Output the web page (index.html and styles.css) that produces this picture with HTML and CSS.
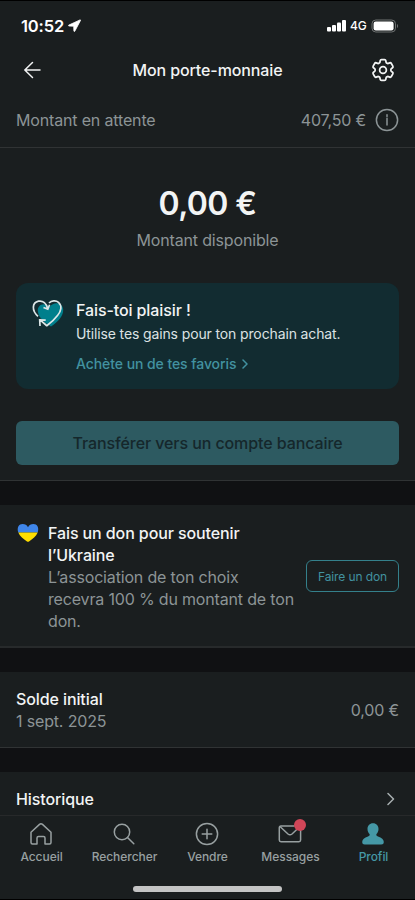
FILE: index.html
```html
<!DOCTYPE html>
<html lang="fr">
<head>
<meta charset="utf-8">
<meta name="viewport" content="width=device-width, initial-scale=1">
<title>Mon porte-monnaie</title>
<link rel="stylesheet" href="styles.css">
</head>
<body>
<div class="screen">
  <header class="status">
    <span class="time">10:52</span>
    <svg class="location" width="13" height="13" viewBox="0 0 13 13"><path d="M12 .9.8 6.1c-.6.3-.4.9.2.9l4.700.2.2 4.800c0 .6.7.7.9.2L12.500 1.400c.1-.4-.1-.6-.5-.5Z" fill="#fff" stroke="#fff" stroke-width=".8"/></svg>
    <svg class="signal" width="19" height="12" viewBox="0 0 19 12" fill="#fff"><rect x="0" y="7" width="4" height="4.500" rx="1"/><rect x="5" y="5" width="4" height="6.500" rx="1"/><rect x="10" y="2.500" width="4" height="9" rx="1"/><rect x="15" y="0" width="4" height="11.500" rx="1"/></svg>
    <span class="network">4G</span>
    <svg class="battery" width="28" height="14" viewBox="0 0 28 14"><rect x="1" y="1" width="23.500" height="12" rx="3.800" fill="none" stroke="#6f7272"/><rect x="2.600" y="2.600" width="20" height="8.800" rx="2.200" fill="#fff"/><path d="M26 5v4c1.400-.6 1.400-3.400 0-4Z" fill="#6f7272"/></svg>
  </header>
  <nav class="topbar">
    <svg width="24" height="24" viewBox="0 0 24 24" class="line"><path d="M20 12H4.800M12.500 4.500 4.800 12l7.700 7.500"/></svg>
    <h1>Mon porte-monnaie</h1>
    <svg width="24" height="24" viewBox="1.700 1.700 20.600 20.600" class="line"><path d="M9.594 3.940c.09-.542.56-.94 1.110-.94h2.593c.55 0 1.020.398 1.110.94l.213 1.281c.063.374.313.686.645.87.074.04.147.083.22.127.325.196.72.257 1.075.124l1.217-.456a1.125 1.125 0 0 1 1.370.49l1.296 2.247a1.125 1.125 0 0 1-.26 1.431l-1.003.827c-.293.241-.438.613-.43.992a7.723 7.723 0 0 1 0 .255c-.008.378.137.75.43.991l1.004.827c.424.35.534.955.26 1.430l-1.298 2.247a1.125 1.125 0 0 1-1.369.491l-1.217-.456c-.355-.133-.75-.072-1.076.124a6.470 6.470 0 0 1-.22.128c-.331.183-.581.495-.644.869l-.213 1.281c-.09.543-.56.94-1.110.94h-2.594c-.55 0-1.019-.398-1.110-.94l-.213-1.281c-.062-.374-.312-.686-.644-.87a6.520 6.520 0 0 1-.22-.127c-.325-.196-.72-.257-1.076-.124l-1.217.456a1.125 1.125 0 0 1-1.369-.49l-1.297-2.247a1.125 1.125 0 0 1 .26-1.431l1.004-.827c.292-.24.437-.613.43-.991a6.932 6.932 0 0 1 0-.255c.007-.38-.138-.751-.43-.992l-1.004-.827a1.125 1.125 0 0 1-.26-1.430l1.297-2.247a1.125 1.125 0 0 1 1.370-.491l1.216.456c.356.133.751.072 1.076-.124.072-.044.146-.086.22-.128.332-.183.582-.495.644-.869l.214-1.280Z"/><circle cx="12" cy="12" r="2.900"/></svg>
  </nav>
  <section class="pending">
    <span>Montant en attente</span>
    <span class="pending-sum">407,50 €</span>
    <svg width="24" height="24" viewBox="0 0 24 24" class="line"><circle cx="12" cy="12" r="10.600"/><path d="M12 10.200V17M12 6.700v1.700"/></svg>
  </section>
  <section class="balance">
    <strong>0,00 €</strong>
    <p>Montant disponible</p>
    <div class="promo">
      <svg width="32" height="32" viewBox="0 0 32 32" fill="none"><path d="M19 27.500C13 24 6.500 19 5.800 12 5.300 6 12 2.500 17.500 8 22 2 30.500 3.500 31.200 10.500 31.500 17 26 23 19 27.500Z" fill="#007f8c"/><path d="M6 17.300C-.5 11.500 0 3.700 6.500 2.200c4.600-.8 8 2.300 9 7.300M11.500 8.500l4.300 1.700 1.800-4.500M17 4c2.500-2.500 7-2.900 9.500-.7 4 3.600 2.500 9.200-.8 13-2.900 3.900-6.700 7.400-10.900 10.400-2.800-2.400-4.500-3.800-7-6.400M8 27l-.3-6.200 6 .4" stroke="#dce7e8" stroke-width="1.700"/></svg>
      <div class="promo-text">
        <h2>Fais-toi plaisir !</h2>
        <p>Utilise tes gains pour ton prochain achat.</p>
        <a>Achète un de tes favoris <svg width="6" height="10" viewBox="0 0 6 10" class="line"><path d="m1 1 4 4-4 4"/></svg></a>
      </div>
    </div>
    <button class="transfer">Transférer vers un compte bancaire</button>
  </section>
  <section class="donation">
    <svg width="24" height="20" viewBox="0 0 24 20"><path d="M2.300 9.500C.6 4.300 3 1 6.600 1 9 1 11 2.200 12 4.200 13 2.200 15 1 17.400 1 21 1 23.400 4.300 21.700 9.500Z" fill="#3f86ea"/><path d="M2.300 9.500h19.400c-1.600 3.700-5.100 6.600-8.700 9-.6.400-1.400.4-2 0-3.600-2.400-7.100-5.300-8.700-9Z" fill="#ffde00"/></svg>
    <div class="donation-text">
      <h2>Fais un don pour soutenir l’Ukraine</h2>
      <p>L’association de ton choix recevra 100 % du montant de ton don.</p>
    </div>
    <button class="donate">Faire un don</button>
  </section>
  <section class="opening">
    <div>
      <h2>Solde initial</h2>
      <p>1 sept. 2025</p>
    </div>
    <span>0,00 €</span>
  </section>
  <section class="history">
    <h2>Historique</h2>
    <svg width="8" height="14" viewBox="0 0 8 14" class="line"><path d="m1 1.500 5.500 5.500L1 12.500"/></svg>
  </section>
  <footer class="tabs">
    <div class="tab"><svg width="24" height="24" viewBox="0 0 24 24" class="line"><path d="M2 10.300 10.500 2.400q1.500-1.400 3 0L22 10.300v10.200q0 1.500-1.500 1.500H16v-6q0-1.500-1.500-1.500h-5Q8 14.500 8 16v6H3.500Q2 22 2 20.500Z"/></svg><span>Accueil</span></div>
    <div class="tab"><svg width="24" height="24" viewBox="0 0 24 24" class="line"><circle cx="10" cy="10" r="7.700"/><path d="m15.500 15.500 6.300 6.300"/></svg><span>Rechercher</span></div>
    <div class="tab"><svg width="24" height="24" viewBox="0 0 24 24" class="line"><circle cx="12" cy="12" r="10.600"/><path d="M12 7.200v9.600M7.200 12h9.600"/></svg><span>Vendre</span></div>
    <div class="tab"><svg width="24" height="24" viewBox="0 0 24 24" class="line"><path d="M16 4H3Q1.300 4 1.300 5.700V18q0 1.700 1.700 1.700h17.900q1.700 0 1.700-1.700V8.500"/><path d="m2.500 5 7.500 7q2 1.500 4 0l4.500-4.200"/></svg><i class="badge"></i><span>Messages</span></div>
    <div class="tab active"><svg width="24" height="24" viewBox="0 0 24 24"><path d="M12 1.300c3.400 0 5.500 2.500 5.500 5.600 0 2.600-1.100 4-2 5.100-.6 1.200.1 1.900 1.500 2.400 3.600 1.300 5.800 3 5.800 5.600 0 1.700-1 2.500-2.500 2.500H3.700c-1.500 0-2.500-.8-2.500-2.500 0-2.600 2.200-4.300 5.800-5.600 1.400-.5 2.100-1.200 1.500-2.400-.9-1.100-2-2.500-2-5.100 0-3.100 2.100-5.600 5.500-5.600Z" fill="currentColor"/></svg><span>Profil</span></div>
  </footer>
  <div class="home"></div>
</div>
</body>
</html>
```
FILE: styles.css
```css
* { box-sizing: border-box; margin: 0; padding: 0; }
body { background: #101113; font-family: Inter, "Liberation Sans", sans-serif; }
.screen {
  width: 415px; height: 900px; overflow: hidden; display: flex; flex-direction: column;
  border-top: 1px solid #000; border-bottom: 1px solid #000; background: #101113;
  color: #f2f4f4; font-size: 16px; line-height: 22px; letter-spacing: -.16px;
}
.screen > * { flex: none; background: #1a1e1f; }
svg { display: block; flex: none; }
.line { fill: none; stroke: currentColor; stroke-width: 1.5; stroke-linejoin: round; stroke-linecap: round; }
h1, h2 { font-size: 16px; font-weight: 500; letter-spacing: -.1px; }
.status { height: 47px; padding: 2px 16px 0 21px; display: flex; align-items: center; color: #fff; }
.time { font-size: 16.500px; font-weight: 600; width: 47px; letter-spacing: -.15px; }
.signal { margin-left: auto; }
.network { font-size: 12px; font-weight: 500; margin: 1px 5px 0 4px; width: 16px; }
.topbar { height: 44px; padding: 0 20px; display: flex; align-items: center; justify-content: space-between; }
.pending { height: 56px; padding: 0 16px; display: flex; align-items: center; color: #8c9496; border-bottom: 1px solid #303334; }
.pending-sum { margin-left: auto; margin-right: 9px; }
.balance { height: 333px; padding: 35px 16px 0; text-align: center; border-bottom: 1px solid #303334; }
.balance strong { display: block; font-size: 32px; line-height: 42px; font-weight: 600; letter-spacing: -.6px; }
.balance > p { margin-top: 4px; color: #8c9496; }
.promo { margin-top: 32px; height: 106px; padding: 16px; border-radius: 12px; background: #122c31; display: flex; gap: 12px; text-align: left; }
.promo-text p { font-size: 14px; line-height: 20px; margin-top: 3px; color: #dce2e3; letter-spacing: -.13px; }
.promo-text a { display: flex; align-items: center; gap: 6px; margin-top: 9px; font-size: 14px; line-height: 22px; font-weight: 500; color: #4292a0; letter-spacing: -.07px; }
.transfer { display: block; width: 100%; height: 44px; margin-top: 32px; border: 0; border-radius: 6px; background: #2d5a61; color: #15272b; font: 500 16px/22px Inter, sans-serif; letter-spacing: -.09px; }
.donation { height: 143px; margin-top: 24px; padding: 17px 16px 0; display: flex; border-bottom: 2px solid #272a2b; }
.donation > svg { margin-top: 1px; }
.donation-text { width: 250px; margin-left: 8px; flex: none; }
.donation p, .opening p, .opening span { color: #8c9496; }
.donation p { letter-spacing: -.17px; }
.donate { width: 93px; height: 32px; flex: none; margin: 38px 0 0 8px; border: 1px solid #34808b; border-radius: 6px; background: transparent; color: #4292a0; font: 400 12px/16px Inter, sans-serif; letter-spacing: -.1px; padding-top: 1px; }
.opening { height: 76px; margin-top: 24px; padding: 0 16px; display: flex; justify-content: space-between; align-items: center; border-bottom: 1px solid #303334; }
.history { height: 43px; margin-top: 24px; padding: 11px 20px 0 16px; display: flex; align-items: center; justify-content: space-between; }
.history svg { color: #a8afb0; }
.tabs { height: 58px; border-top: 1px solid #27292a; display: grid; grid-template-columns: repeat(5, 1fr); color: #98a0a1; }
.tab { position: relative; display: flex; flex-direction: column; align-items: center; padding-top: 6px; }
.tab svg { margin-right: .4px; }
.tab span { font-size: 12px; line-height: 16px; margin-top: 3px; font-weight: 500; letter-spacing: -.05px; }
.active { color: #4598a6; }
.badge { position: absolute; left: 45px; top: 3px; width: 12px; height: 12px; border-radius: 50%; background: #d14658; }
.home { flex: 1 0 auto !important; padding-top: 13px; }
.home::before { content: ""; display: block; width: 149px; height: 6px; margin: 0 auto; border-radius: 3px; background: #c4c4c4; }
```
